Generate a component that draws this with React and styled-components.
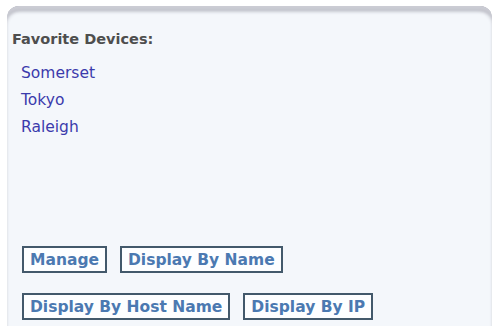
import React from 'react';
import styled, { createGlobalStyle } from 'styled-components';

const GlobalStyle = createGlobalStyle`
  html, body {
    margin: 0;
    padding: 0;
    background: #ffffff;
  }
  body {
    font-family: "DejaVu Sans", Verdana, sans-serif;
  }
`;

const devices = ['Somerset', 'Tokyo', 'Raleigh'];

const App = () => {
  return (
    <>
      <GlobalStyle />
      <Page>
        <Panel>
          <Heading>Favorite Devices:</Heading>
          <DeviceList>
            {devices.map((name) => (
              <DeviceLink key={name} href="#">{name}</DeviceLink>
            ))}
          </DeviceList>
          <Actions>
            <ButtonRow>
              <ActionButton>Manage</ActionButton>
              <ActionButton>Display By Name</ActionButton>
            </ButtonRow>
            <ButtonRow>
              <ActionButton>Display By Host Name</ActionButton>
              <ActionButton>Display By IP</ActionButton>
            </ButtonRow>
          </Actions>
        </Panel>
      </Page>
    </>
  );
};

export default App;

const Page = styled.div`
  width: 495px;
  height: 332px;
  padding: 6px 3px 6px 7px;
  box-sizing: border-box;
  background: #ffffff;
`;

const Panel = styled.div`
  height: 100%;
  box-sizing: border-box;
  display: flex;
  flex-direction: column;
  padding: 25px 0 0 5px;
  background: #f4f7fb;
  border-radius: 12px 12px 0 0;
  box-shadow: inset 0 5px 3px -1px #cbccd4, inset 2px 8px 4px -4px #b5b6bf,
    inset -2px 8px 4px -4px #b5b6bf;
`;

const Heading = styled.div`
  font-size: 14.5px;
  font-weight: bold;
  line-height: 17px;
  color: #4e4e4e;
`;

const DeviceList = styled.div`
  display: flex;
  flex-direction: column;
  gap: 8px;
  padding: 16px 0 0 9px;
`;

const DeviceLink = styled.a`
  font-size: 15.5px;
  line-height: 19px;
  color: #3b3bac;
  text-decoration: none;
  align-self: flex-start;
`;

const Actions = styled.div`
  margin-top: auto;
  padding: 0 0 6px 10px;
  display: flex;
  flex-direction: column;
  gap: 20px;
`;

const ButtonRow = styled.div`
  display: flex;
  gap: 13px;
`;

const ActionButton = styled.button`
  height: 27px;
  box-sizing: border-box;
  padding: 0 6px;
  margin: 0;
  border: 2px solid #43596b;
  border-radius: 0;
  background: #fdfeff;
  font-family: "DejaVu Sans", Verdana, sans-serif;
  font-size: 15.5px;
  font-weight: bold;
  color: #4b79b1;
  cursor: pointer;
`;
